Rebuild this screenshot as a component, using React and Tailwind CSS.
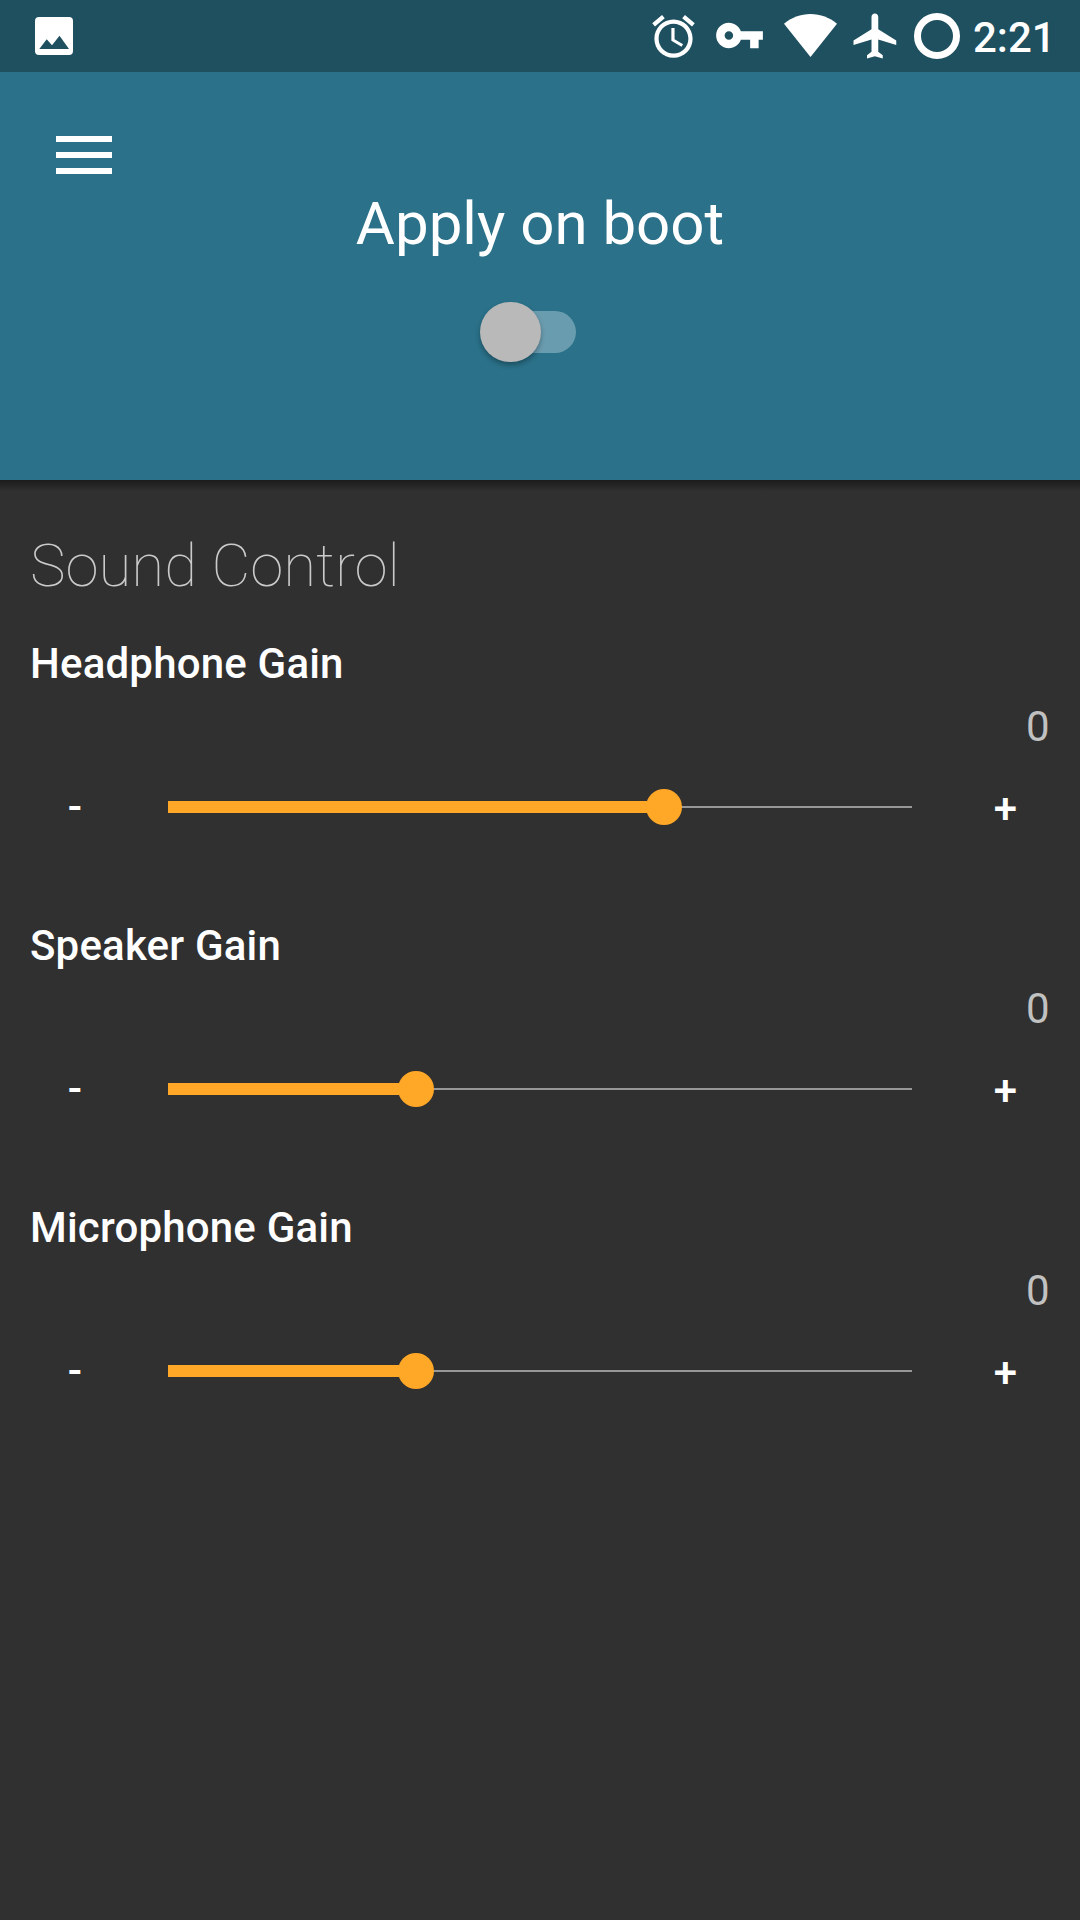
const GAINS = [
  { name: "Headphone Gain", value: 0, fraction: 2 / 3 },
  { name: "Speaker Gain", value: 0, fraction: 1 / 3 },
  { name: "Microphone Gain", value: 0, fraction: 1 / 3 },
];

function StatusBar() {
  return (
    <div className="relative z-10 flex h-[72px] items-start bg-[#1e5060] pl-[35px] text-white">
      <svg className="mt-[17px] size-[38px] shrink-0" viewBox="0 0 38 38" fill="currentColor" fillRule="evenodd">
        <path d="M4 0h30a4 4 0 0 1 4 4v30a4 4 0 0 1-4 4H4a4 4 0 0 1-4-4V4a4 4 0 0 1 4-4zM4.300 32H34L24.500 18.800 17 28.200 11.700 22.200z" />
      </svg>
      <svg className="mt-[11px] ml-[575px] size-[51px] shrink-0" viewBox="0 0 24 24" fill="currentColor">
        <path d="M22 5.72l-4.6-3.86-1.29 1.53 4.6 3.86L22 5.72zM7.88 3.39L6.6 1.86 2 5.71l1.29 1.53 4.59-3.85zM12.5 8H11v6l4.75 2.85.75-1.23-4-2.37V8zM12 4c-4.97 0-9 4.03-9 9s4.02 9 9 9c4.97 0 9-4.03 9-9s-4.03-9-9-9zm0 16c-3.87 0-7-3.13-7-7s3.13-7 7-7 7 3.13 7 7-3.13 7-7 7z" />
      </svg>
      <svg className="mt-[10px] ml-[15px] size-[51px] shrink-0" viewBox="0 0 24 24" fill="currentColor">
        <path d="M12.65 10C11.83 7.67 9.61 6 7 6c-3.31 0-6 2.69-6 6s2.69 6 6 6c2.61 0 4.83-1.67 5.65-4H17v4h4v-4h2v-4H12.65zM7 14c-1.1 0-2-.9-2-2s.9-2 2-2 2 .9 2 2-.9 2-2 2z" />
      </svg>
      <svg className="mt-[14px] ml-[19px] h-[43px] w-[53px] shrink-0" viewBox="0 0 53 43" fill="currentColor">
        <path d="M26.5 43L0 9.8C7.500 3.500 16.500 0 26.500 0S45.500 3.500 53 9.800z" />
      </svg>
      <svg className="mt-[8.5px] ml-[12px] size-[54px] shrink-0" viewBox="0 0 24 24" fill="currentColor">
        <path d="M21 16v-2l-8-5V3.500c0-.83-.67-1.500-1.500-1.500S10 2.670 10 3.500V9l-8 5v2l8-2.500V19l-2 1.500V22l3.500-1 3.500 1v-1.500L13 19v-5.500l8 2.500z" />
      </svg>
      <div className="mt-[13px] ml-[11px] size-[46px] shrink-0 rounded-full border-[7px] border-white" />
      <div className="mt-[12.5px] ml-[13px] text-[42px] leading-[50px] font-medium">2:21</div>
    </div>
  );
}

function Header() {
  return (
    <header className="h-[408px] bg-[#2a7189] pt-16 text-white">
      <button aria-label="Menu" className="ml-14 flex w-14 flex-col gap-[10px]">
        <span className="h-[6px] w-full bg-white" />
        <span className="h-[6px] w-full bg-white" />
        <span className="h-[6px] w-full bg-white" />
      </button>
      <h1 className="mt-[15px] text-center text-[60px] leading-[70px]">Apply on boot</h1>
      <div className="mt-[42.5px] ml-[480px] flex h-[61px] w-[96px] items-center">
        <div className="z-10 size-[60.5px] shrink-0 rounded-full bg-[#b9b9b9] shadow-[0_3px_5px_rgba(0,0,0,0.3)]" />
        <div className="-ml-[49px] h-[42px] w-[84.5px] shrink-0 rounded-full bg-[#6a9caf]" />
      </div>
    </header>
  );
}

function GainControl({ name, value, fraction }) {
  const percent = `${fraction * 100}%`;
  return (
    <section className="h-[282px]">
      <h3 className="pl-[30px] text-[42px] leading-[50px] font-medium tracking-[0.19px] text-white">{name}</h3>
      <div className="mt-[13px] pr-[30.5px] text-right text-[42px] leading-[50px] text-[#c1c1c1]">{value}</div>
      <div className="mt-[30px] flex h-[50px] items-center text-[42px] leading-[50px] font-medium text-white">
        <button className="w-[150px] text-center">-</button>
        <div className="relative ml-[18px] flex h-9 w-[744px] items-center">
          <div className="h-3 bg-[#ffa726]" style={{ width: percent }} />
          <div className="h-[2px] flex-1 bg-[#979797]" />
          <div className="absolute size-9 -translate-x-1/2 rounded-full bg-[#ffa726]" style={{ left: percent }} />
        </div>
        <button className="ml-[18px] w-[150px] pt-[4px] pl-px text-center">+</button>
      </div>
    </section>
  );
}

export default function App() {
  return (
    <div className="h-[1920px] w-[1080px] overflow-hidden bg-[#303030] font-['Roboto',sans-serif]">
      <StatusBar />
      <Header />
      <div className="h-[11px] bg-linear-to-b from-[#1b1b1b] to-[#303030]" />
      <main className="pt-10">
        <h2 className="pl-[30px] text-[60px] leading-[70px] font-thin text-[#cacaca]">Sound Control</h2>
        <div className="mt-[38px]">
          {GAINS.map((gain) => (
            <GainControl key={gain.name} {...gain} />
          ))}
        </div>
      </main>
    </div>
  );
}
